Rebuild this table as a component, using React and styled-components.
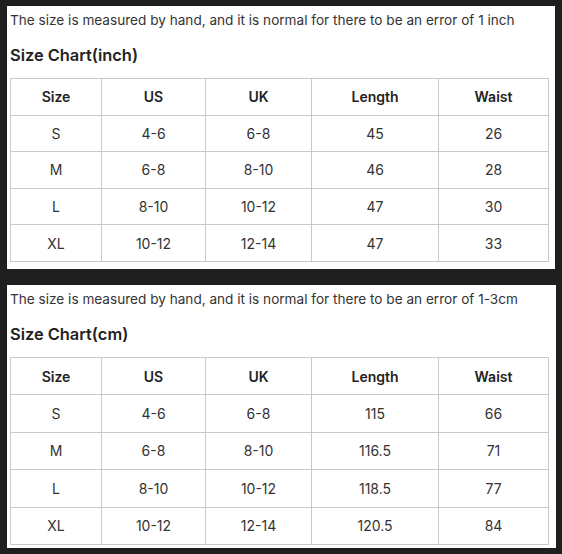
import React from "react";
import styled, { createGlobalStyle } from "styled-components";

const GlobalStyle = createGlobalStyle`
  html, body {
    margin: 0;
    padding: 0;
    background: #1f1f1f;
  }
  body {
    font-family: Inter, "Noto Sans", sans-serif;
    color: #333333;
  }
`;

const Page = styled.div`
  display: flex;
  flex-direction: column;
  gap: 16px;
  padding: 6px 6px 6px 7px;
`;

const Panel = styled.section`
  background: #ffffff;
  width: ${(props) => props.width}px;
  height: 263px;
  box-sizing: border-box;
  padding: 3px 3px 0 3px;
`;

const Note = styled.p`
  margin: 0;
  padding-top: 1px;
  font-size: 13.6px;
  line-height: 20px;
  color: #333;
`;

const Title = styled.h3`
  margin: 14px 0 0 0;
  font-size: 16.4px;
  font-weight: 600;
  line-height: 22px;
  color: #222;
`;

const Table = styled.table`
  margin-top: 12px;
  width: 538px;
  border-collapse: collapse;
  table-layout: fixed;
  font-size: 14px;

  th,
  td {
    border: 1px solid #c9c9c9;
    text-align: center;
    height: ${(props) => props.rowHeight}px;
    padding: 0;
    color: #333;
  }

  th {
    font-weight: 600;
    color: #222;
  }
`;

const widths = [91, 104, 106, 127, 110];
const headers = ["Size", "US", "UK", "Length", "Waist"];

const charts = [
  {
    note: "The size is measured by hand, and it is normal for there to be an error of 1 inch",
    title: "Size Chart(inch)",
    width: 548,
    rowHeight: 35.6,
    rows: [
      ["S", "4-6", "6-8", "45", "26"],
      ["M", "6-8", "8-10", "46", "28"],
      ["L", "8-10", "10-12", "47", "30"],
      ["XL", "10-12", "12-14", "47", "33"],
    ],
  },
  {
    note: "The size is measured by hand, and it is normal for there to be an error of 1-3cm",
    title: "Size Chart(cm)",
    width: 549,
    rowHeight: 36.4,
    rows: [
      ["S", "4-6", "6-8", "115", "66"],
      ["M", "6-8", "8-10", "116.5", "71"],
      ["L", "8-10", "10-12", "118.5", "77"],
      ["XL", "10-12", "12-14", "120.5", "84"],
    ],
  },
];

const SizeChart = ({ chart }) => (
  <Panel width={chart.width}>
    <Note>{chart.note}</Note>
    <Title>{chart.title}</Title>
    <Table rowHeight={chart.rowHeight}>
      <colgroup>
        {widths.map((w, i) => (
          <col key={i} style={{ width: w }} />
        ))}
      </colgroup>
      <thead>
        <tr>
          {headers.map((h) => (
            <th key={h}>{h}</th>
          ))}
        </tr>
      </thead>
      <tbody>
        {chart.rows.map((row) => (
          <tr key={row[0]}>
            {row.map((cell, i) => (
              <td key={i}>{cell}</td>
            ))}
          </tr>
        ))}
      </tbody>
    </Table>
  </Panel>
);

export default function App() {
  return (
    <>
      <GlobalStyle />
      <Page>
        {charts.map((c) => (
          <SizeChart key={c.title} chart={c} />
        ))}
      </Page>
    </>
  );
}
